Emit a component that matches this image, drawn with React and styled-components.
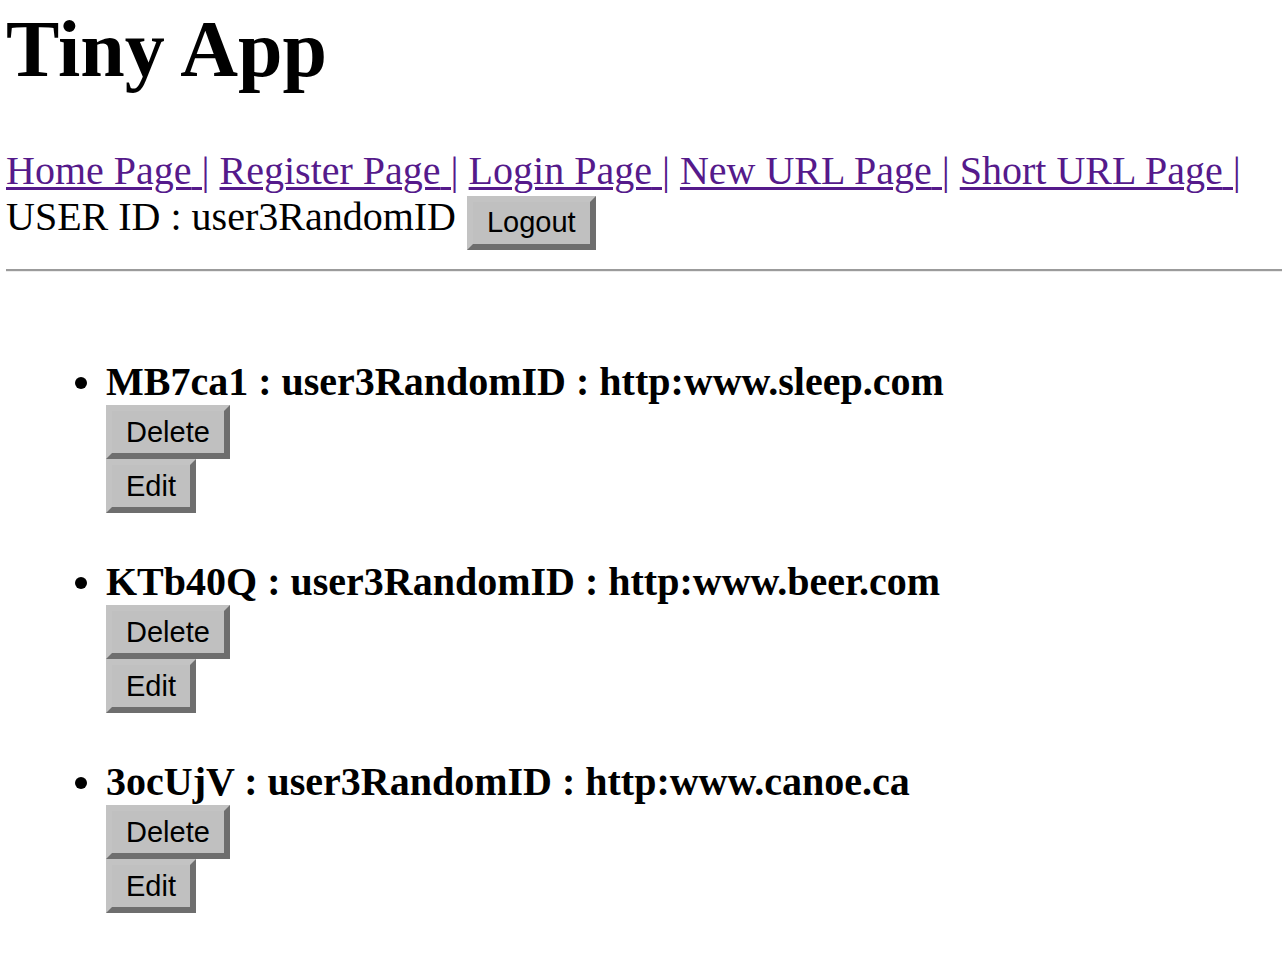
import React from 'react'
import styled, { createGlobalStyle } from 'styled-components';

const GlobalStyle = createGlobalStyle`
    body {
        margin: 0;
        padding: 0 0 0 6px;
        background: #fff;
        color: #000;
        font-family: "Liberation Serif", "Times New Roman", serif;
    }
`

const links = ['Home Page', 'Register Page', 'Login Page', 'New URL Page', 'Short URL Page']

const urls = [
    { id: 'MB7ca1', user: 'user3RandomID', long: 'http:www.sleep.com' },
    { id: 'KTb40Q', user: 'user3RandomID', long: 'http:www.beer.com' },
    { id: '3ocUjV', user: 'user3RandomID', long: 'http:www.canoe.ca' },
]

function App() {
  return (
    <Page>
        <GlobalStyle />
        <Title>Tiny App</Title>
        <Nav>
            {links.map((l, i) => (
                <React.Fragment key={l}>
                    <NavLink href="#">{l} |</NavLink>{i < links.length - 1 && ' '}
                </React.Fragment>
            ))}
        </Nav>
        <UserLine>
            USER ID : user3RandomID <Button inline>Logout</Button>
        </UserLine>
        <Rule />
        <UrlList>
            {urls.map(u => (
                <UrlItem key={u.id}>
                    <UrlText>{u.id} : {u.user} : {u.long}</UrlText>
                    <Button>Delete</Button>
                    <Button>Edit</Button>
                </UrlItem>
            ))}
        </UrlList>
    </Page>
  )
}

export default App

const Page = styled.div`
    padding-top: 3px;
`

const Title = styled.h1`
    margin: 0 0 53px 0;
    font-size: 80px;
    line-height: 92px;
    font-weight: bold;
`

const Nav = styled.div`
    font-size: 40px;
    line-height: 46px;
`

const NavLink = styled.a`
    color: #551a8b;
    text-decoration: underline;
    text-decoration-thickness: 3px;
    text-underline-offset: 3px;
`

const UserLine = styled.div`
    font-size: 40px;
    line-height: 46px;
    height: 54px;
`

const Button = styled.button`
    display: ${props => props.inline ? 'inline-block' : 'block'};
    margin: 0 0 0 ${props => props.inline ? '1px' : '0'};
    vertical-align: ${props => props.inline ? '-2px' : 'baseline'};
    box-sizing: border-box;
    height: 54px;
    padding: 0 14px;
    font-family: "Liberation Sans", Arial, sans-serif;
    font-size: 29px;
    line-height: 33px;
    color: #000;
    background: #c0c0c0;
    border: 6px solid;
    border-color: #c3c3c3 #6e6e6e #6e6e6e #c3c3c3;
    border-radius: 0;
    cursor: pointer;
`

const Rule = styled.hr`
    margin: 21px 0 0 0;
    height: 0;
    border: none;
    border-top: 2px solid #9b9b9b;
    border-bottom: 1px solid #ececec;
`

const UrlList = styled.ul`
    margin: 87px 0 0 0;
    padding: 0 0 0 100px;
    list-style: disc;
`

const UrlItem = styled.li`
    margin-bottom: 46px;
    font-size: 40px;
    line-height: 46px;
`

const UrlText = styled.div`
    font-size: 40px;
    line-height: 46px;
    font-weight: bold;
`
